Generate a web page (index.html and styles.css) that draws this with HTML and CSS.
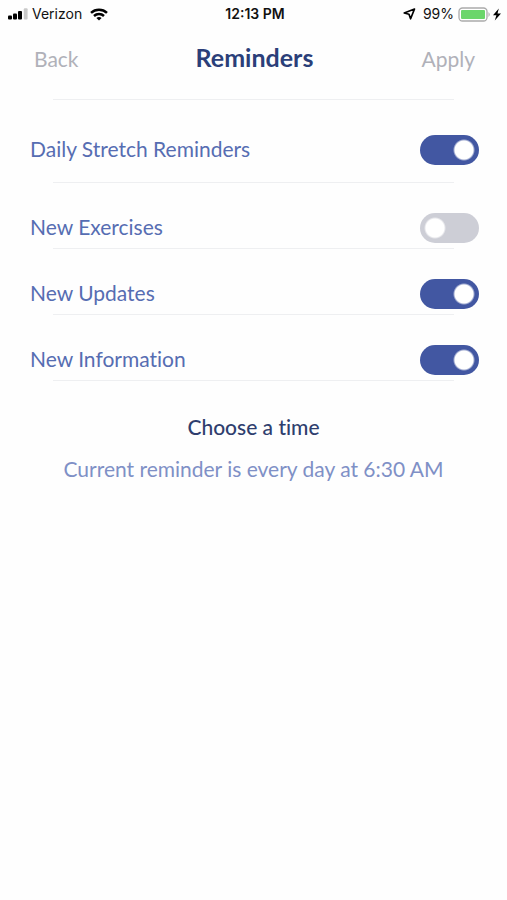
FILE: index.html
```html
<!DOCTYPE html>
<html lang="en">
<head>
<meta charset="utf-8">
<meta name="viewport" content="width=device-width, initial-scale=1">
<title>Reminders</title>
<link rel="stylesheet" href="styles.css">
</head>
<body>
<div class="status">
  <div class="status-side">
    <svg class="signal" width="20" height="12" viewBox="0 0 20 12" aria-hidden="true">
      <rect x="0" y="7.500" width="4" height="4" rx="1"/>
      <rect x="5" y="5.500" width="4" height="6" rx="1"/>
      <rect x="10" y="3" width="4" height="8.500" rx="1"/>
      <rect x="15.800" y="0.300" width="3.800" height="11.200" rx="1" fill="#c9c9c9"/>
    </svg>
    <span class="carrier">Verizon</span>
    <svg width="18" height="13" viewBox="0 0 18 13" fill="none" stroke="#000" stroke-width="2.500" aria-hidden="true">
      <path d="M1 4.800C5.500 .6 12.500 .6 17 4.800"/>
      <path d="M4 8C6.800 5.400 11.200 5.400 14 8"/>
      <path d="M9 12.500L6.400 9.900C7.900 8.600 10.100 8.600 11.600 9.900Z" fill="#000" stroke="none"/>
    </svg>
  </div>
  <time class="clock">12:13 PM</time>
  <div class="status-side status-right">
    <svg width="13" height="12" viewBox="0 0 13 12" fill="none" stroke="#000" stroke-width="1.700" stroke-linejoin="round" aria-hidden="true">
      <path d="M11.500 1L1.200 5L6 6.200L7.600 10.800Z"/>
    </svg>
    <span class="percent">99%</span>
    <svg width="44" height="15" viewBox="0 0 44 15" aria-hidden="true">
      <rect x="1" y="1" width="28" height="13" rx="3.500" fill="#fff" stroke="#aaa" stroke-width="1.300"/>
      <rect x="3" y="3" width="24" height="9" rx="1" fill="#6bd66b"/>
      <path d="M30.500 5Q33 7.500 30.500 10Z" fill="#aaa"/>
      <path d="M40.800 1.500L35 8.300H38.400L36.800 13.500L43 6.400H39.500Z"/>
    </svg>
  </div>
</div>
<header class="bar">
  <button class="action" type="button">Back</button>
  <h1 class="title">Reminders</h1>
  <button class="action" type="button">Apply</button>
</header>
<main>
  <div class="settings">
    <div class="row row-main"><label for="daily">Daily Stretch Reminders</label><input class="switch" id="daily" type="checkbox" role="switch" checked></div>
    <div class="row"><label for="exercises">New Exercises</label><input class="switch" id="exercises" type="checkbox" role="switch"></div>
    <div class="row"><label for="updates">New Updates</label><input class="switch" id="updates" type="checkbox" role="switch" checked></div>
    <div class="row"><label for="information">New Information</label><input class="switch" id="information" type="checkbox" role="switch" checked></div>
  </div>
  <section class="time">
    <h2 class="time-title">Choose a time</h2>
    <p class="time-text">Current reminder is every day at 6:30 AM</p>
  </section>
</main>
</body>
</html>
```
FILE: styles.css
```css
* {
  box-sizing: border-box;
}

body {
  margin: 0;
  background: #fefefe;
  color: #566db2;
  font-family: Lato, "Open Sans", sans-serif;
  font-variant-ligatures: none;
}

.status {
  display: grid;
  grid-template-columns: 1fr auto 1fr;
  align-items: center;
  height: 28px;
  padding: 0 5px 0 8px;
  color: #111;
  font: 14px/20px Inter, sans-serif;
}

.status-side {
  display: flex;
  align-items: center;
}

.status-right {
  justify-content: flex-end;
}

.carrier {
  margin: 0 8px 0 4px;
}

.clock {
  font-weight: 600;
}

.percent {
  margin: 0 4px 0 7px;
}

.bar {
  display: grid;
  grid-template-columns: 1fr auto 1fr;
  align-items: center;
  height: 71px;
  padding: 0 32px 12px 34px;
}

.action {
  justify-self: start;
  padding: 2px 0 0;
  border: 0;
  background: none;
  color: #b0b1b9;
  font: 400 21px/26px Lato, sans-serif;
}

.action:last-child {
  justify-self: end;
}

.title {
  margin: 0;
  padding-bottom: 2px;
  color: #2b3f79;
  font-size: 25px;
  font-weight: 700;
  line-height: 30px;
}

.settings {
  background: linear-gradient(#eeeff1, #eeeff1) top center / calc(100% - 106px) 1px no-repeat;
}

.row {
  display: flex;
  align-items: center;
  justify-content: space-between;
  padding: 30px 28px 6px 30px;
  background: linear-gradient(#eeeff1, #eeeff1) bottom center / calc(100% - 106px) 1px no-repeat;
  font-size: 21px;
  line-height: 28px;
}

.row label {
  padding-bottom: 2px;
}

.row-main {
  padding-top: 36px;
  padding-bottom: 18px;
}

.switch {
  appearance: none;
  width: 59px;
  height: 30px;
  margin: 0;
  border-radius: 15px;
  background: radial-gradient(circle at 15px 15px, #fff 9px, #cdced6 11px);
}

.switch:checked {
  background: radial-gradient(circle at 44px 15px, #fff 9px, #4257a2 11px);
}

.time {
  padding: 31px 16px;
  text-align: center;
}

.time-title {
  margin: 0 0 12px;
  color: #2f3e6e;
  font-size: 21px;
  font-weight: 500;
  line-height: 30px;
}

.time-text {
  margin: 0;
  color: #7f90c6;
  font-size: 21px;
  line-height: 30px;
}
```
